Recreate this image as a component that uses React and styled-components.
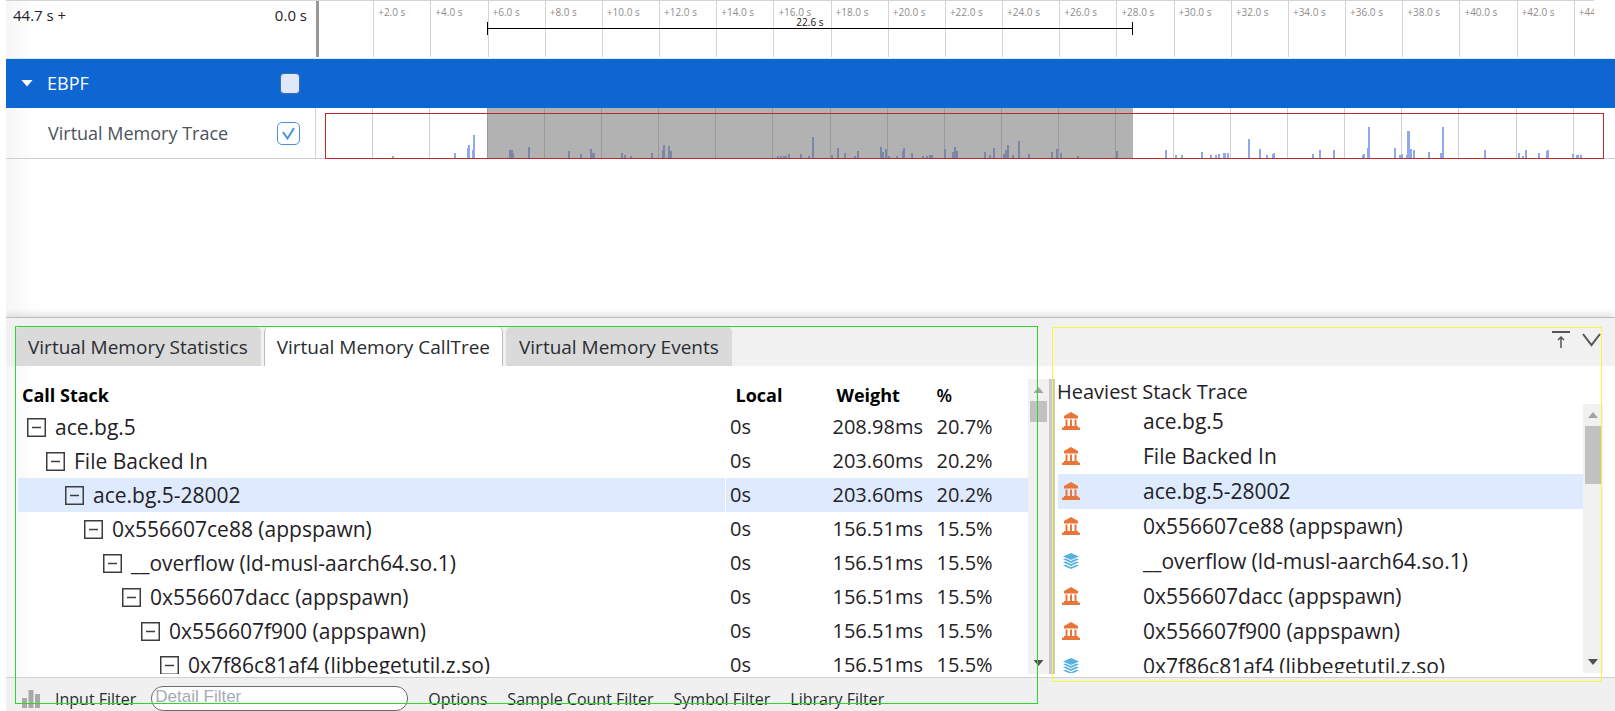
import React, { useState } from "react";
import styled, { createGlobalStyle } from "styled-components";

const DURATION = 44.7;
const SELECTION = { left: "13.4%", width: "50.5%" };

const ticks = Array.from({ length: 23 }, (_, i) => i * 2);

const spikes = [
  [77, 1], [139, 4], [152, 9], [153, 12], [157, 7], [158, 22],
  [194, 7], [196, 7], [197, 4], [213, 10], [253, 6], [265, 3], [275, 8], [277, 4], [278, 4],
  [306, 4], [309, 2], [315, 1], [336, 4], [347, 7], [348, 12], [353, 11], [355, 6],
  [462, 1], [465, 1], [468, 1], [470, 1], [473, 3], [485, 3], [493, 1], [497, 20],
  [516, 2], [522, 9], [529, 4], [539, 1], [542, 6], [565, 10], [567, 5], [570, 8], [573, 1],
  [581, 1], [587, 6], [588, 9], [596, 4], [607, 1], [611, 1], [614, 2], [616, 2],
  [629, 8], [637, 5], [639, 10], [641, 6], [669, 5], [674, 2], [678, 9], [688, 3], [690, 7],
  [692, 12], [697, 2], [703, 16], [713, 3], [736, 5], [741, 8], [745, 4], [762, 1],
  [801, 6], [850, 7], [860, 2], [866, 2], [886, 5], [895, 2], [900, 2], [903, 3],
  [908, 4], [909, 4], [912, 4], [933, 18], [944, 8], [951, 2], [957, 3], [958, 4],
  [997, 3], [1004, 7], [1018, 7], [1047, 2], [1048, 3], [1052, 9], [1053, 30], [1079, 9],
  [1084, 2], [1086, 3], [1091, 2], [1092, 26], [1093, 26], [1095, 8], [1098, 7], [1113, 5],
  [1125, 4], [1127, 30], [1169, 7], [1203, 4], [1207, 1], [1210, 7], [1223, 4],
  [1231, 6], [1232, 7], [1257, 3], [1261, 2], [1262, 2], [1265, 2],
];

const calls = [
  { name: "ace.bg.5", weight: "208.98ms", pct: "20.7%", kind: "app" },
  { name: "File Backed In", weight: "203.60ms", pct: "20.2%", kind: "app" },
  { name: "ace.bg.5-28002", weight: "203.60ms", pct: "20.2%", kind: "app" },
  { name: "0x556607ce88 (appspawn)", weight: "156.51ms", pct: "15.5%", kind: "app" },
  { name: "__overflow (ld-musl-aarch64.so.1)", weight: "156.51ms", pct: "15.5%", kind: "lib" },
  { name: "0x556607dacc (appspawn)", weight: "156.51ms", pct: "15.5%", kind: "app" },
  { name: "0x556607f900 (appspawn)", weight: "156.51ms", pct: "15.5%", kind: "app" },
  { name: "0x7f86c81af4 (libbegetutil.z.so)", weight: "156.51ms", pct: "15.5%", kind: "lib" },
];

const GlobalStyle = createGlobalStyle`
  *, *::before, *::after { box-sizing: border-box; }
  body { margin: 0; background: #fff; color: #1f2226; font-family: "Open Sans", "Noto Sans", sans-serif; }
  button, input { font-family: inherit; }
  button { border: 0; padding: 0; background: none; color: inherit; cursor: pointer; }
`;

const Page = styled.div`
  display: flex;
  flex-direction: column;
  height: 100vh;
  margin-left: 6px;
  overflow: hidden;
  background: linear-gradient(90deg, #f6f6f6, #fff 30px);
`;

const TimelinePane = styled.section`
  flex: 0 0 317px;
`;

const RulerRow = styled.div`
  display: flex;
  height: 59px;
  border-bottom: 1px solid #dce9f6;
`;

const RulerSummary = styled.div`
  display: flex;
  flex: 0 0 310px;
  justify-content: space-between;
  padding: 3px 9px 0 7px;
  border-top: 1px solid #d4d4d4;
  font-size: 15px;
  line-height: 22px;
`;

const Ruler = styled.div`
  position: relative;
  display: flex;
  flex: 1;
  min-width: 0;
  height: 57px;
  margin-right: 21px;
  overflow: hidden;
  border-top: 1px solid #d4d4d4;
`;

const RulerTick = styled.div`
  flex: 0 0 calc(200% / ${DURATION});
  padding: 3px 0 0 4px;
  border-left: ${(p) => (p.$origin ? "3px solid #979797" : "1px solid #d4d4d4")};
  color: #8d8d8d;
  font-size: 10px;
  line-height: 16px;
  white-space: nowrap;
`;

const RangeMarker = styled.div`
  position: absolute;
  top: 15px;
  left: ${SELECTION.left};
  width: ${SELECTION.width};
  height: 19px;
  color: #111;
  font-size: 10px;
  line-height: 13px;
  text-align: center;

  &::before {
    content: "";
    position: absolute;
    inset: 12px 0 auto;
    border-top: 1px solid #000;
  }

  &::after {
    content: "";
    position: absolute;
    inset: 6px 0 0;
    border: solid #000;
    border-width: 0 1px;
  }
`;

const GroupRow = styled.div`
  display: flex;
  align-items: center;
  height: 49px;
  padding: 0 0 1px 15px;
  background: #0d66d2;
  color: #fff;
`;

const Caret = styled.button`
  width: 12px;
  height: 7px;
  background: #fff;
  clip-path: polygon(0 0, 100% 0, 50% 100%);
`;

const GroupName = styled.label`
  flex: 0 0 247px;
  padding-left: 14px;
  font-size: 18px;
  line-height: 24px;
`;

const GroupCheck = styled.input`
  appearance: none;
  width: 20px;
  height: 21px;
  margin: 0;
  border: 1px solid #3f6dac;
  border-radius: 4px;
  background: #dfe8f8;
`;

const TrackRow = styled.div`
  display: flex;
  height: 51px;
  border-bottom: 1px solid #cfcfcf;
`;

const TrackHead = styled.div`
  display: flex;
  flex: 0 0 309px;
  align-items: center;
  justify-content: space-between;
  padding: 0 15px 0 42px;
  color: #4b535c;
  font-size: 18px;
  line-height: 24px;
`;

const CheckHolder = styled.span`
  display: grid;

  > * { grid-area: 1 / 1; }
  > svg { pointer-events: none; place-self: center; }
`;

const TrackCheck = styled.input`
  appearance: none;
  width: 23px;
  height: 23px;
  margin: 0;
  border: 1px solid #4a92e8;
  border-radius: 5px;
  background: #fff;
`;

const Track = styled.div`
  position: relative;
  flex: 1;
  min-width: 0;
  padding-right: 21px;
  border-left: 1px solid #d4d4d4;
`;

const TrackLane = styled.div`
  position: relative;
  display: flex;
  height: 50px;
  overflow: hidden;
`;

const GridCell = styled.div`
  flex: 0 0 calc(200% / ${DURATION});
  border-right: 1px solid #cfcfcf;
`;

const Spikes = styled.svg`
  position: absolute;
  inset: auto 0 0;
  width: 100%;
  height: 32px;
`;

const SelectionShade = styled.div`
  position: absolute;
  inset: 0 auto 0 ${SELECTION.left};
  width: ${SELECTION.width};
  background: rgba(102, 102, 102, 0.5);
`;

const Frame = styled.div`
  position: absolute;
  inset: ${(p) => p.$inset};
  border: 1px solid ${(p) => p.$color};
  pointer-events: none;
`;

const Sheet = styled.section`
  position: relative;
  display: flex;
  flex: 1;
  flex-direction: column;
  min-height: 0;
  border-top: 1px solid #bdbdbd;
  box-shadow: 0 -2px 8px rgba(0, 0, 0, 0.14);
`;

const TabBar = styled.div`
  display: flex;
  align-items: flex-end;
  gap: 3px;
  height: 48px;
  padding-left: 9px;
  background: #f1f1f1;
`;

const Tab = styled.button`
  height: 39px;
  padding: 0 12px;
  border: solid ${(p) => (p.$active ? "#bcbcbc" : "#dadada")};
  border-width: 0 1px;
  border-radius: 5px 5px 0 0;
  background: ${(p) => (p.$active ? "#fff" : "#dadada")};
  color: #2a2d31;
  font-size: 19px;
  line-height: 24px;
`;

const SheetTools = styled.div`
  display: flex;
  align-self: flex-start;
  gap: 12px;
  margin: 12px 14px 0 auto;
  color: #555;

  button { height: 18px; }
  svg { display: block; }
`;

const SheetBody = styled.div`
  display: flex;
  flex: 1;
  min-height: 0;
  padding: 13px 0 3px;
`;

const TreePane = styled.div`
  flex: 1;
  min-width: 0;
  padding-left: 12px;
  overflow: hidden;
`;

const TreeTable = styled.table`
  width: 100%;
  border-collapse: collapse;
  table-layout: fixed;
  font-size: 20px;
  line-height: 26px;

  th {
    height: 31px;
    padding: 0 0 0 10px;
    font-size: 18px;
    font-weight: 700;
    line-height: 24px;
    text-align: left;
    color: #000;
  }
  th:first-child { padding-left: 4px; }
  th:nth-child(3) { padding-left: 8px; }
  th:last-child { padding-left: 4px; font-weight: 600; }
  td { height: 34px; padding: 0 0 0 4px; }
`;

const TreeRow = styled.tr`
  background: ${(p) => (p.$selected ? "#deebfe" : "transparent")};

  td:nth-child(2) { border-left: 1px solid #fff; }
`;

const CallCell = styled.div`
  display: flex;
  align-items: center;
  gap: 9px;
  padding-left: calc(5px + 19px * ${(p) => p.$depth});
  font-size: 21px;
  white-space: nowrap;

  button { height: 21px; }
  svg { display: block; }
`;

const ScrollBar = styled.div`
  display: flex;
  flex: 0 0 ${(p) => p.$width}px;
  flex-direction: column;
  align-items: center;
  justify-content: space-between;
  padding: 8px 2px;
  background: #f1f1f1;
`;

const ScrollThumb = styled.div`
  align-self: stretch;
  height: ${(p) => p.$size}px;
  margin: 8px 0 auto;
  background: #c1c1c1;
`;

const ScrollArrow = styled.div`
  width: 10px;
  height: 6px;
  background: ${(p) => (p.$down ? "#505050" : "#a3a3a3")};
  clip-path: ${(p) => (p.$down ? "polygon(0 0, 100% 0, 50% 100%)" : "polygon(50% 0, 100% 100%, 0 100%)")};
`;

const Splitter = styled.div`
  flex: 0 0 6px;
  background: #c9c9c9;
`;

const HeavyPane = styled.aside`
  display: flex;
  flex: 0 1 560px;
  flex-direction: column;
  min-width: 0;
`;

const HeavyTitle = styled.h2`
  margin: 0;
  padding-left: 2px;
  font-size: 20px;
  font-weight: 400;
  line-height: 25px;
`;

const HeavyBody = styled.div`
  display: flex;
  flex: 1;
  min-height: 0;
  padding: 0 12px 1px 3px;
`;

const HeavyList = styled.ul`
  flex: 1;
  min-width: 0;
  margin: 0;
  padding: 0;
  overflow: hidden;
  list-style: none;
`;

const HeavyItem = styled.li`
  display: flex;
  align-items: center;
  gap: 63px;
  height: 35px;
  padding: 0 0 2px 4px;
  background: ${(p) => (p.$selected ? "#deebfe" : "transparent")};
  font-size: 21px;
  line-height: 26px;
  white-space: nowrap;
`;

const FilterBar = styled.footer`
  display: flex;
  flex: 0 0 34px;
  align-items: center;
  gap: 20px;
  padding: 8px 0 0 16px;
  border-top: 1px solid #d0d0d0;
  background: #f0f0f0;
  color: #2a2d31;
  font-size: 16px;
  line-height: 22px;

  button { font-size: 16px; line-height: 22px; }
`;

const FilterField = styled.label`
  display: flex;
  align-items: center;
  gap: 15px;
  white-space: nowrap;
`;

const FilterInput = styled.input`
  width: 257px;
  height: 25px;
  padding: 0 3px 4px;
  border: 1px solid #6b6b6b;
  border-radius: 12px;
  background: #fff;
  font-family: "Liberation Sans", Arial, sans-serif;
  font-size: 17px;

  &::placeholder { color: #a4abb5; }
`;

const TempleIcon = () => (
  <svg width="18" height="18" viewBox="0 0 18 18" fill="#e8763a" aria-hidden="true">
    <path d="M9 0 16 4v1H2V4zM2 5h14v1.500H2zM3.500 7.500h2V14h-2zM8 7.500h2V14H8zM12.500 7.500h2V14h-2zM2 14h14v1.500H2zM0 15.500h18V18H0z" />
  </svg>
);

const LayersIcon = () => (
  <svg width="18" height="18" viewBox="0 0 18 18" fill="#56b1dc" aria-hidden="true">
    <path d="M9 1 17 4.500 9 8 1 4.500z" />
    <path d="M1 7.200 3.500 6.500 9 9l5.500-2.500 2.500.7-8 3.700z" />
    <path d="M1 10.300 3.500 9.600 9 12.100l5.500-2.500 2.500.7-8 3.700z" />
    <path d="M1 13.400 3.500 12.700 9 15.200l5.500-2.500 2.500.7L9 17z" />
  </svg>
);

const CollapseIcon = () => (
  <svg width="19" height="19" viewBox="0 0 19 19" fill="none" stroke="#3a3e42" aria-hidden="true">
    <rect x="0.750" y="0.750" width="17.500" height="17.500" strokeWidth="1.500" />
    <path d="M5 9.500h9" strokeWidth="1.500" />
  </svg>
);

export default function App() {
  const [checked, setChecked] = useState(true);
  const [group, setGroup] = useState(false);
  const [filter, setFilter] = useState("");

  return (
    <>
      <GlobalStyle />
      <Page>
        <TimelinePane>
          <RulerRow>
            <RulerSummary>
              <span>44.7 s +</span>
              <span>0.0 s</span>
            </RulerSummary>
            <Ruler>
              {ticks.map((t) => (
                <RulerTick key={t} $origin={t === 0}>
                  {t > 0 && `+${t.toFixed(1)} s`}
                </RulerTick>
              ))}
              <RangeMarker>22.6 s</RangeMarker>
            </Ruler>
          </RulerRow>
          <GroupRow>
            <Caret aria-label="Collapse EBPF" />
            <GroupName htmlFor="ebpf">EBPF</GroupName>
            <GroupCheck id="ebpf" type="checkbox" checked={group} onChange={(e) => setGroup(e.target.checked)} />
          </GroupRow>
          <TrackRow>
            <TrackHead>
              <label htmlFor="vm-trace">Virtual Memory Trace</label>
              <CheckHolder>
                <TrackCheck
                  id="vm-trace"
                  type="checkbox"
                  checked={checked}
                  onChange={(e) => setChecked(e.target.checked)}
                />
                {checked && (
                  <svg width="13" height="13" viewBox="0 0 13 13" fill="none" stroke="#4a92e8" strokeWidth="2">
                    <path d="M1 5 5.500 11.500 12 1" />
                  </svg>
                )}
              </CheckHolder>
            </TrackHead>
            <Track>
              <TrackLane>
                {ticks.map((t) => (
                  <GridCell key={t} />
                ))}
                <Spikes viewBox="0 0 1278 32" preserveAspectRatio="none" aria-hidden="true">
                  {spikes.map(([x, h]) => (
                    <rect key={x} x={x - 1} y={31 - h} width="2" height={h + 1} fill="#8fa9ea" />
                  ))}
                </Spikes>
                <SelectionShade />
              </TrackLane>
              <Frame $inset="5px 11px -1px 9px" $color="#c0272a" />
            </Track>
          </TrackRow>
        </TimelinePane>

        <Sheet>
          <TabBar role="tablist">
            <Tab role="tab">Virtual Memory Statistics</Tab>
            <Tab role="tab" aria-selected="true" $active>Virtual Memory CallTree</Tab>
            <Tab role="tab">Virtual Memory Events</Tab>
            <SheetTools>
              <button aria-label="Expand panel">
                <svg width="18" height="18" viewBox="0 0 18 18" fill="none" stroke="currentColor">
                  <path d="M0 2h18" strokeWidth="2" />
                  <path d="M9 18V7M6 10l3-3 3 3" strokeWidth="1.500" />
                </svg>
              </button>
              <button aria-label="Minimize panel">
                <svg width="19" height="18" viewBox="0 0 19 18" fill="none" stroke="currentColor">
                  <path d="M1 4l8.500 11L18 4" strokeWidth="2" />
                </svg>
              </button>
            </SheetTools>
          </TabBar>

          <SheetBody>
            <TreePane>
              <TreeTable>
                <colgroup>
                  <col />
                  <col width="103" />
                  <col width="104" />
                  <col width="95" />
                </colgroup>
                <thead>
                  <tr>
                    <th>Call Stack</th>
                    <th>Local</th>
                    <th>Weight</th>
                    <th>%</th>
                  </tr>
                </thead>
                <tbody>
                  {calls.map((c, i) => (
                    <TreeRow key={c.name} $selected={i === 2}>
                      <td>
                        <CallCell $depth={i}>
                          <button aria-label={`Collapse ${c.name}`}>
                            <CollapseIcon />
                          </button>
                          {c.name}
                        </CallCell>
                      </td>
                      <td>0s</td>
                      <td>{c.weight}</td>
                      <td>{c.pct}</td>
                    </TreeRow>
                  ))}
                </tbody>
              </TreeTable>
            </TreePane>
            <ScrollBar $width={21}>
              <ScrollArrow />
              <ScrollThumb $size={21} />
              <ScrollArrow $down />
            </ScrollBar>
            <Splitter />
            <HeavyPane>
              <HeavyTitle>Heaviest Stack Trace</HeavyTitle>
              <HeavyBody>
                <HeavyList>
                  {calls.map((c, i) => (
                    <HeavyItem key={c.name} $selected={i === 2}>
                      {c.kind === "app" ? <TempleIcon /> : <LayersIcon />}
                      {c.name}
                    </HeavyItem>
                  ))}
                </HeavyList>
                <ScrollBar $width={20}>
                  <ScrollArrow />
                  <ScrollThumb $size={58} />
                  <ScrollArrow $down />
                </ScrollBar>
              </HeavyBody>
            </HeavyPane>
          </SheetBody>

          <FilterBar>
            <FilterField>
              <svg width="18" height="18" viewBox="0 0 18 18" fill="#a9a9a9" aria-hidden="true">
                <path d="M0 8h5v10H0zM6.500 0h5v18h-5zM13 4h5v14h-5z" />
              </svg>
              Input Filter
              <FilterInput
                type="text"
                placeholder="Detail Filter"
                value={filter}
                onChange={(e) => setFilter(e.target.value)}
              />
            </FilterField>
            <button>Options</button>
            <button>Sample Count Filter</button>
            <button>Symbol Filter</button>
            <button>Library Filter</button>
          </FilterBar>

          <Frame $inset="8px 577px 7px 9px" $color="#2ed62e" />
          <Frame $inset="9px 13px 29px 1046px" $color="#f6f63c" />
        </Sheet>
      </Page>
    </>
  );
}
